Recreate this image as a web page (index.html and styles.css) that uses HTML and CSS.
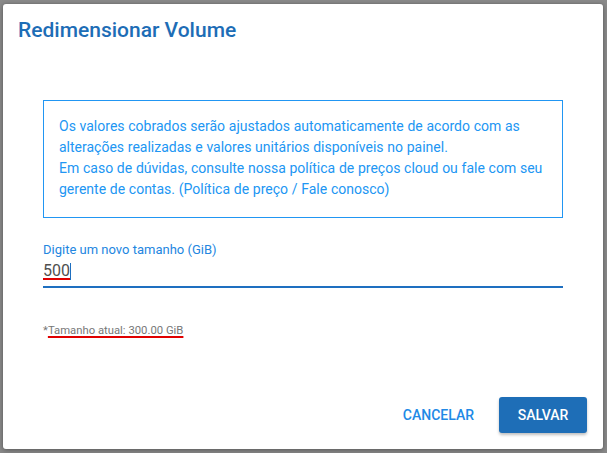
FILE: index.html
```html
<!DOCTYPE html>
<html lang="pt-BR">
<head>
<meta charset="utf-8">
<title>Redimensionar Volume</title>
<link rel="stylesheet" href="styles.css">
</head>
<body>
<div class="backdrop">
  <div class="dialog">
    <h2 class="title">Redimensionar Volume</h2>
    <div class="content">
      <div class="info">
        <p class="info-text">Os valores cobrados serão ajustados automaticamente de acordo com as<br>alterações realizadas e valores unitários disponíveis no painel.<br>Em caso de dúvidas, consulte nossa política de preços cloud ou fale com seu<br>gerente de contas. (Política de preço / Fale conosco)</p>
      </div>
      <div class="field">
        <label class="field-label">Digite um novo tamanho (GiB)</label>
        <div class="field-input"><span class="marked">500</span><span class="caret"></span></div>
      </div>
      <p class="hint">*<span class="marked">Tamanho atual: 300.00 GiB</span></p>
    </div>
    <div class="actions">
      <button class="btn btn-text">CANCELAR</button>
      <button class="btn btn-primary">SALVAR</button>
    </div>
  </div>
</div>
</body>
</html>
```
FILE: styles.css
```css
* { box-sizing: border-box; }
html, body { margin: 0; padding: 0; }
body {
  background: #8a8a8a;
  font-family: Roboto, "Liberation Sans", sans-serif;
  width: 607px;
  height: 453px;
  overflow: hidden;
}
.backdrop {
  padding: 4px 4px 4px 3px;
}
.dialog {
  width: 600px;
  height: 445px;
  background: #fff;
  border-radius: 3px;
  box-shadow: 0 2px 6px rgba(0,0,0,0.25), 0 0 3px rgba(0,0,0,0.2);
  display: flex;
  flex-direction: column;
}
.title {
  margin: 0;
  padding: 14px 15px 0 15px;
  font-size: 21px;
  line-height: 24px;
  font-weight: 500;
  color: #1d6db6;
}
.content {
  padding: 58px 40px 0 40px;
}
.info {
  border: 1px solid #2196f3;
  padding: 15px 15px 17px 15px;
}
.info-text {
  margin: 0;
  font-size: 14px;
  line-height: 21px;
  color: #2196f3;
  white-space: nowrap;
  word-spacing: 0.25px;
}
.field {
  margin-top: 24px;
}
.field-label {
  display: block;
  font-size: 13px;
  line-height: 16px;
  color: #2386df;
}
.field-input {
  margin-top: 3px;
  font-size: 16px;
  line-height: 20px;
  color: #505050;
  padding-bottom: 5px;
  border-bottom: 2px solid #1e6fc0;
  display: flex;
  align-items: center;
}
.marked {
  text-decoration: underline;
  text-decoration-color: #e00000;
  text-decoration-thickness: 2px;
  text-underline-offset: 2px;
}
.caret {
  display: inline-block;
  width: 1px;
  height: 17px;
  background: #1e6fc0;
}
.hint {
  margin: 35px 0 0 0;
  font-size: 11.3px;
  line-height: 16px;
  color: #777;
}
.actions {
  margin-top: auto;
  padding: 0 16px 16px 16px;
  display: flex;
  justify-content: flex-end;
  gap: 9px;
}
.btn {
  height: 36px;
  padding: 0 16px;
  border: none;
  border-radius: 3px;
  font-family: Roboto, "Liberation Sans", sans-serif;
  font-size: 14px;
  font-weight: 500;
  cursor: pointer;
}
.btn-text {
  background: transparent;
  color: #2189e6;
}
.btn-primary {
  background: #1e6eb7;
  color: #fff;
  min-width: 88px;
  box-shadow: 0 2px 3px rgba(0,0,0,0.25);
}
```
